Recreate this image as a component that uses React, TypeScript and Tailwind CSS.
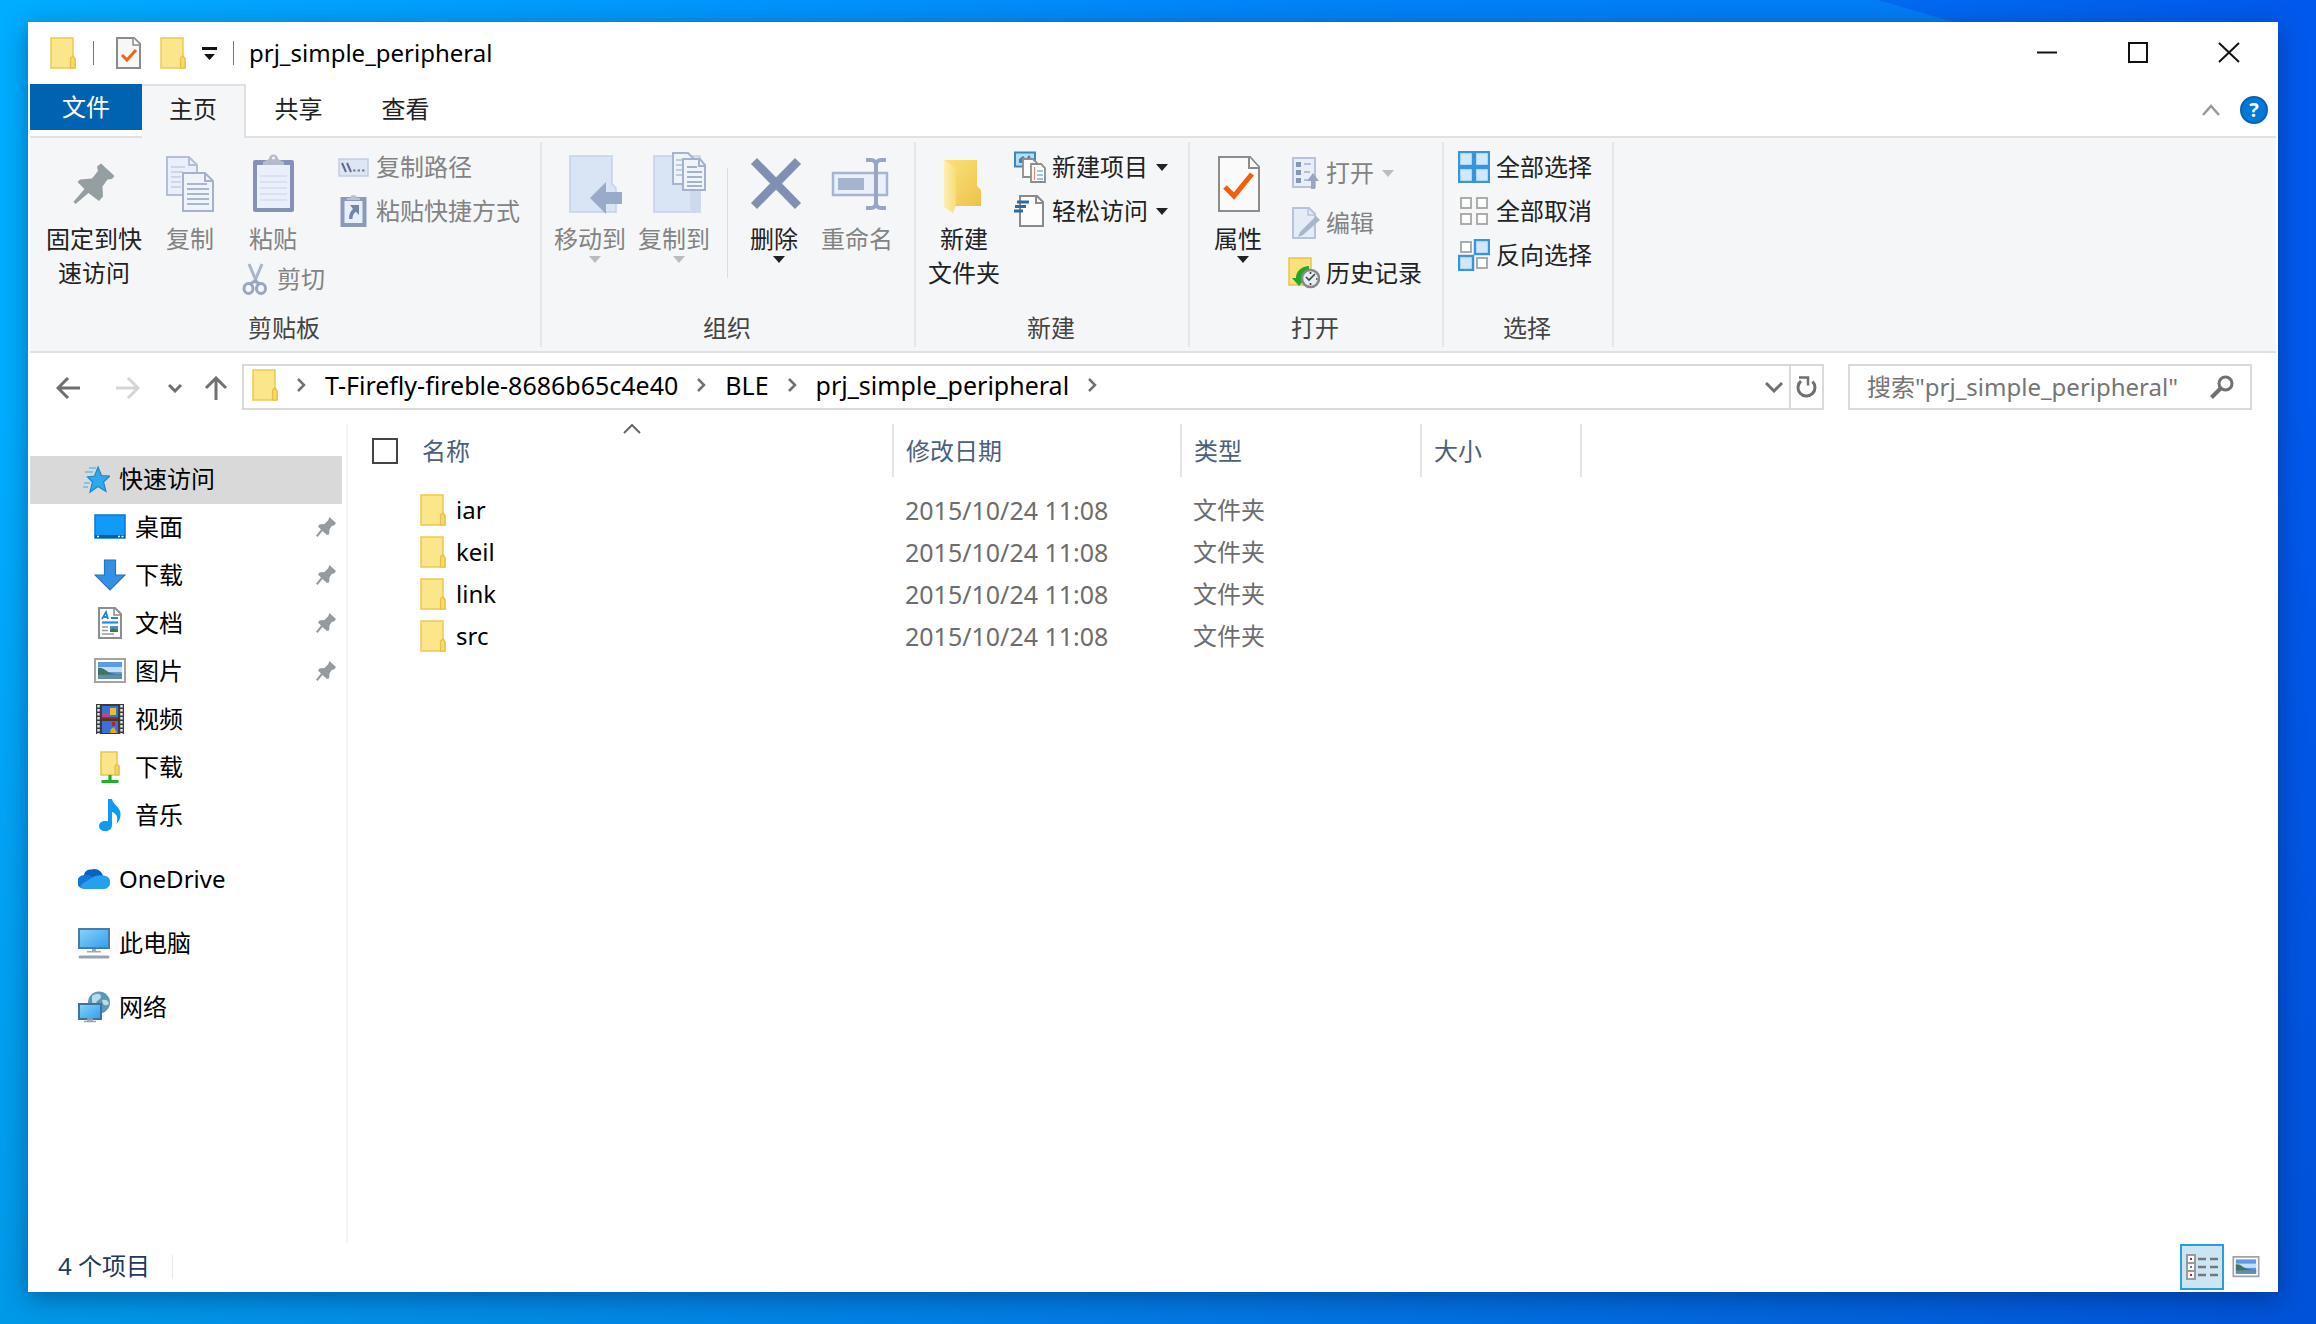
import { useState } from 'react'
import type { ReactNode } from 'react'
import { clsx } from 'clsx'

const FILES = [
  { name: 'iar', date: '2015/10/24 11:08', type: '文件夹' },
  { name: 'keil', date: '2015/10/24 11:08', type: '文件夹' },
  { name: 'link', date: '2015/10/24 11:08', type: '文件夹' },
  { name: 'src', date: '2015/10/24 11:08', type: '文件夹' },
]

const QUICK_ITEMS = [
  { label: '桌面', icon: <DesktopIcon />, pinned: true },
  { label: '下载', icon: <DownloadIcon />, pinned: true },
  { label: '文档', icon: <DocumentIcon />, pinned: true },
  { label: '图片', icon: <PictureIcon />, pinned: true },
  { label: '视频', icon: <VideoIcon />, pinned: false },
  { label: '下载', icon: <SharedFolderIcon />, pinned: false },
  { label: '音乐', icon: <MusicIcon />, pinned: false },
]

const CRUMBS = ['T-Firefly-fireble-8686b65c4e40', 'BLE', 'prj_simple_peripheral']

export default function App() {
  return (
    <div className="relative flex min-h-screen bg-linear-to-r from-[#00adff] via-[#0088fa] to-[#0058ec] pt-[22px] pr-[38px] pb-8 pl-7 font-['Noto_Sans','Noto_Sans_CJK_SC',sans-serif] text-[24px] leading-[34px] text-black">
      <Wallpaper />
      <main className="relative flex min-w-0 flex-1 flex-col bg-white px-0.5 pb-0.5 shadow-[0_6px_24px_rgba(0,20,60,0.4)]">
        <TitleBar />
        <TabStrip />
        <Ribbon />
        <AddressRow />
        <div className="flex flex-1">
          <Sidebar />
          <FileList />
        </div>
        <StatusBar />
      </main>
    </div>
  )
}

function Wallpaper() {
  return (
    <svg className="absolute inset-0 h-full w-full" viewBox="0 0 2316 1324" preserveAspectRatio="none" aria-hidden="true">
      <defs>
        <linearGradient id="wall-floor" x1="0" y1="0" x2="0" y2="1">
          <stop offset="0.3" stopColor="#003070" stopOpacity="0" />
          <stop offset="1" stopColor="#003070" stopOpacity="0.16" />
        </linearGradient>
        <linearGradient id="wall-beam" x1="0" y1="0" x2="1" y2="0">
          <stop offset="0" stopColor="#00a0ff" stopOpacity="0" />
          <stop offset="1" stopColor="#00a0ff" stopOpacity="0.4" />
        </linearGradient>
      </defs>
      <rect x="0" width="2316" height="1324" fill="url(#wall-floor)" />
      <path d="M1200 0H1878L1960 24H1200Z" fill="url(#wall-beam)" />
    </svg>
  )
}

function TitleBar() {
  return (
    <header className="flex h-[62px] shrink-0 items-center pl-5">
      <FolderIcon />
      <span className="ml-[17px] h-6 w-px bg-[#777]" />
      <button className="ml-[22px]" aria-label="属性">
        <svg width="26" height="32" viewBox="0 0 26 32" className="block">
          <path d="M1 1h17l6 6v24H1z" fill="#f7f7f8" stroke="#8b8b8b" strokeWidth="2" />
          <path d="M17 1v7h7" fill="#fff" stroke="#8b8b8b" strokeWidth="1.5" />
          <path d="M6 18l5 5 9-10" fill="none" stroke="#f0641e" strokeWidth="3" />
        </svg>
      </button>
      <button className="ml-[18px]" aria-label="新建文件夹">
        <FolderIcon />
      </button>
      <button className="ml-4" aria-label="自定义快速访问工具栏">
        <svg width="15" height="13" viewBox="0 0 15 13" className="block">
          <path d="M0 1.5h15" stroke="#111" strokeWidth="3" />
          <path d="M2 7h11l-5.500 6z" fill="#111" />
        </svg>
      </button>
      <span className="ml-4 h-6 w-px bg-[#777]" />
      <h1 className="ml-[15px]">prj_simple_peripheral</h1>
      <div className="ml-auto flex self-stretch pr-0.5">
        <CaptionButton label="最小化">
          <path d="M1 10.500h20" />
        </CaptionButton>
        <CaptionButton label="最大化">
          <path d="M2 1h18v19H2z" />
        </CaptionButton>
        <CaptionButton label="关闭">
          <path d="M1 1l20 19M21 1L1 20" />
        </CaptionButton>
      </div>
    </header>
  )
}

function CaptionButton({ label, children }: { label: string; children: ReactNode }) {
  return (
    <button className="flex w-[91px] items-center justify-center pb-0.5 hover:bg-[#e5e5e5]" aria-label={label}>
      <svg width="22" height="21" viewBox="0 0 22 21" fill="none" stroke="#111" strokeWidth="2">
        {children}
      </svg>
    </button>
  )
}

function TabStrip() {
  const [active, setActive] = useState('主页')

  return (
    <nav className="flex h-[54px] shrink-0 border-b-2 border-[#dfe1e2]">
      <button className="h-[46px] w-28 bg-[#0063b1] text-white">文件</button>
      {['主页', '共享', '查看'].map(tab => (
        <button
          key={tab}
          onClick={() => setActive(tab)}
          className={clsx(
            'h-[54px] border-t-2 border-r-2 pb-1.5 text-[#222]',
            active === tab ? 'w-[104px] border-[#dfe1e2] bg-[#f4f6f8]' : 'w-[107px] border-transparent'
          )}>
          {tab}
        </button>
      ))}
      <div className="ml-auto flex items-center gap-5 pr-2">
        <button aria-label="最小化功能区">
          <svg width="18" height="12" viewBox="0 0 18 12" className="block">
            <path d="M1 11l8-9 8 9" fill="none" stroke="#9a9a9a" strokeWidth="2.500" />
          </svg>
        </button>
        <button
          className="size-7 rounded-full border-2 border-[#0a63b0] bg-[#0078d7] text-[20px] leading-6 font-bold text-white"
          aria-label="帮助">
          ?
        </button>
      </div>
    </nav>
  )
}

function Ribbon() {
  return (
    <section className="flex h-[215px] shrink-0 border-b-2 border-[#dfe1e2] bg-[#f4f6f8] py-1 text-[#222]">
      <RibbonGroup label="剪贴板" width="w-[512px]" inset="pl-4">
        <BigButton lines={['固定到快', '速访问']} icon={<BigPinIcon />} className="w-24" />
        <BigButton lines={['复制']} icon={<CopyIcon />} className="w-24" disabled />
        <div className="flex w-[98px] flex-col items-start gap-2 pl-px">
          <BigButton lines={['粘贴']} icon={<PasteIcon />} className="w-[68px]" disabled />
          <SmallButton label="剪切" icon={<CutIcon />} disabled />
        </div>
        <div className="flex flex-col items-start gap-3.5 pl-0.5">
          <SmallButton label="复制路径" icon={<CopyPathIcon />} disabled />
          <SmallButton label="粘贴快捷方式" icon={<PasteShortcutIcon />} disabled />
        </div>
      </RibbonGroup>

      <RibbonGroup label="组织" width="w-[374px]" inset="pl-1.5">
        <BigButton lines={['移动到']} icon={<MoveToIcon />} className="w-[84px]" menu disabled />
        <BigButton lines={['复制到']} icon={<CopyToIcon />} className="w-[84px]" menu disabled />
        <span className="mt-4 mr-1.5 ml-[11px] h-[110px] w-px bg-[#dcdfe2]" />
        <BigButton lines={['删除']} icon={<DeleteIcon />} className="w-20" menu />
        <BigButton lines={['重命名']} icon={<RenameIcon />} className="w-[86px]" disabled />
      </RibbonGroup>

      <RibbonGroup label="新建" width="w-[274px]">
        <BigButton lines={['新建', '文件夹']} icon={<NewFolderIcon />} className="w-24" />
        <div className="flex flex-col items-start gap-3.5 pl-0.5">
          <SmallButton label="新建项目" icon={<NewItemIcon />} menu />
          <SmallButton label="轻松访问" icon={<EasyAccessIcon />} menu />
        </div>
      </RibbonGroup>

      <RibbonGroup label="打开" width="w-[254px]">
        <BigButton lines={['属性']} icon={<PropertiesIcon />} className="w-24" menu />
        <div className="flex flex-col items-start gap-5 pt-1.5 pl-0.5">
          <SmallButton label="打开" icon={<OpenIcon />} menu disabled />
          <SmallButton label="编辑" icon={<EditIcon />} disabled />
          <SmallButton label="历史记录" icon={<HistoryIcon />} />
        </div>
      </RibbonGroup>

      <RibbonGroup label="选择" width="w-[170px]" inset="pl-3.5">
        <div className="flex flex-col items-start gap-3.5">
          <SmallButton label="全部选择" icon={<SelectIcon cells={[true, true, true, true]} />} />
          <SmallButton label="全部取消" icon={<SelectIcon cells={[false, false, false, false]} />} />
          <SmallButton label="反向选择" icon={<SelectIcon cells={[false, true, true, false]} />} />
        </div>
      </RibbonGroup>
    </section>
  )
}

interface RibbonGroupProps {
  label: string
  width: string
  inset?: string
  children: ReactNode
}

function RibbonGroup({ label, width, inset, children }: RibbonGroupProps) {
  return (
    <div className={clsx('flex shrink-0 flex-col border-r-2 border-[#e4e6e8] pt-2.5 pb-0.5', width)}>
      <div className={clsx('flex min-h-0 flex-1', inset)}>{children}</div>
      <div className="pr-0.5 text-center text-[#444]">{label}</div>
    </div>
  )
}

interface BigButtonProps {
  lines: string[]
  icon: ReactNode
  className: string
  menu?: boolean
  disabled?: boolean
}

function BigButton({ lines, icon, className, menu, disabled }: BigButtonProps) {
  return (
    <button
      disabled={disabled}
      className={clsx('flex shrink-0 flex-col items-center self-start disabled:text-[#838383]', className)}>
      <span className="h-[70px]">{icon}</span>
      {lines.map(line => (
        <span key={line} className="whitespace-nowrap">{line}</span>
      ))}
      {menu && <MenuArrow className="ml-2.5" />}
    </button>
  )
}

interface SmallButtonProps {
  label: string
  icon: ReactNode
  menu?: boolean
  disabled?: boolean
}

function SmallButton({ label, icon, menu, disabled }: SmallButtonProps) {
  return (
    <button
      disabled={disabled}
      className="flex h-[30px] shrink-0 items-center gap-1.5 whitespace-nowrap disabled:text-[#838383]">
      {icon}
      <span>{label}</span>
      {menu && <MenuArrow className="ml-0.5" />}
    </button>
  )
}

function MenuArrow({ className }: { className: string }) {
  return (
    <svg width="12" height="7" viewBox="0 0 12 7" className={clsx('[:disabled>&]:opacity-50', className)}>
      <path d="M0 0h12L6 7z" fill="currentColor" />
    </svg>
  )
}

function AddressRow() {
  return (
    <div className="flex h-[71px] shrink-0 items-start pt-[11px] pr-6 pl-[26px]">
      <div className="flex h-[46px] items-center pt-0.5 text-[#707070]">
        <button aria-label="后退">
          <svg width="24" height="22" viewBox="0 0 24 22" fill="none" stroke="currentColor" strokeWidth="3" className="block">
            <path d="M24 11H2M12 1L2 11l10 10" />
          </svg>
        </button>
        <button className="ml-9 text-[#d5d5d5]" aria-label="前进">
          <svg width="24" height="22" viewBox="0 0 24 22" fill="none" stroke="currentColor" strokeWidth="3" className="block">
            <path d="M0 11h22M12 1l10 10-10 10" />
          </svg>
        </button>
        <button className="ml-7" aria-label="最近浏览的位置">
          <svg width="14" height="9" viewBox="0 0 14 9" fill="none" stroke="currentColor" strokeWidth="3" className="block">
            <path d="M1 1l6 6 6-6" />
          </svg>
        </button>
        <button className="ml-[22px]" aria-label="上移">
          <svg width="24" height="24" viewBox="0 0 24 24" fill="none" stroke="currentColor" strokeWidth="3" className="block">
            <path d="M12 24V2M2 12L12 2l10 10" />
          </svg>
        </button>
      </div>

      <div className="ml-3.5 flex h-[46px] flex-1 items-center border-2 border-[#d9d9d9] pl-2">
        <div className="flex items-center gap-[19px] pb-1">
          <FolderIcon />
          <CrumbChevron />
          {CRUMBS.map(crumb => (
            <div key={crumb} className="flex items-center gap-[19px]">
              <a href="#" className="text-[25px] whitespace-nowrap">{crumb}</a>
              <CrumbChevron />
            </div>
          ))}
        </div>
        <div className="ml-auto flex self-stretch">
          <button className="px-1.5" aria-label="以前的位置">
            <svg width="18" height="12" viewBox="0 0 18 12" fill="none" stroke="#707070" strokeWidth="3">
              <path d="M1 2l8 8 8-8" />
            </svg>
          </button>
          <button className="flex w-[33px] items-center justify-center border-l-2 border-[#d9d9d9]" aria-label="刷新">
            <svg width="22" height="24" viewBox="0 0 22 24" fill="none" stroke="#707070" strokeWidth="3">
              <path d="M5 6A8.500 8.500 0 1 0 16.500 6.500" />
              <path d="M3 2.500h9v8" strokeWidth="2.500" />
            </svg>
          </button>
        </div>
      </div>

      <label className="ml-6 flex h-[46px] w-[404px] items-center border-2 border-[#d9d9d9] pr-4 pl-[17px]">
        <input
          type="text"
          aria-label="搜索"
          placeholder={'搜索"prj_simple_peripheral"'}
          className="min-w-0 flex-1 outline-none placeholder:text-[#757575]"
        />
        <svg width="24" height="24" viewBox="0 0 24 24" fill="none" stroke="#707070">
          <circle cx="15.500" cy="8.500" r="6.500" strokeWidth="3" />
          <path d="M11 13L1.500 22.500" strokeWidth="4" />
        </svg>
      </label>
    </div>
  )
}

function CrumbChevron() {
  return (
    <svg width="9" height="14" viewBox="0 0 9 14" fill="none" stroke="#707070" strokeWidth="2.500" className="shrink-0">
      <path d="M1 1l6 6-6 6" />
    </svg>
  )
}

function Sidebar() {
  return (
    <aside className="w-[318px] shrink-0 border-r-2 border-[#f3f3f3] pt-8 pr-1">
      <a href="#" className="flex h-12 items-center gap-[9px] bg-[#d9d9d9] pb-0.5 pl-12">
        <StarIcon />
        快速访问
      </a>
      <ul className="mb-4">
        {QUICK_ITEMS.map((item, i) => (
          <li key={i}>
            <a href="#" className="flex h-12 items-center gap-[9px] pr-1.5 pb-0.5 pl-16 hover:bg-[#e5f3ff]">
              {item.icon}
              {item.label}
              {item.pinned && <PinIcon />}
            </a>
          </li>
        ))}
      </ul>
      <div className="flex flex-col gap-4">
        <a href="#" className="flex h-12 items-center gap-[9px] pb-0.5 pl-12"><CloudIcon />OneDrive</a>
        <a href="#" className="flex h-12 items-center gap-[9px] pb-0.5 pl-12"><ComputerIcon />此电脑</a>
        <a href="#" className="flex h-12 items-center gap-[9px] pb-0.5 pl-12"><NetworkIcon />网络</a>
      </div>
    </aside>
  )
}

function FileList() {
  return (
    <div className="min-w-0 flex-1">
      <table className="w-[1233px] table-fixed border-collapse text-left">
        <thead className="text-[#4c607a]">
          <tr className="h-[53px]">
            <th className="w-[545px] border-r-2 border-[#e5e5e5] p-0 font-normal">
              <div className="relative ml-6 flex h-[53px] items-center gap-6">
                <input type="checkbox" aria-label="全选" className="size-[26px] appearance-none border-2 border-[#444] checked:bg-[#0078d7]" />
                <span>名称</span>
                <svg width="18" height="10" viewBox="0 0 18 10" fill="none" stroke="#666" strokeWidth="2" className="absolute top-0 left-1/2 -translate-x-1/2">
                  <path d="M1 9l8-8 8 8" />
                </svg>
              </div>
            </th>
            <th className="w-[288px] border-r-2 border-[#e5e5e5] py-0 pr-0 pl-3 font-normal">修改日期</th>
            <th className="w-[240px] border-r-2 border-[#e5e5e5] py-0 pr-0 pl-3 font-normal">类型</th>
            <th className="w-[160px] border-r-2 border-[#e5e5e5] py-0 pr-0 pl-3 font-normal">大小</th>
          </tr>
        </thead>
        <tbody className="text-[#6d6d6d] before:block before:h-3 before:content-['']">
          {FILES.map(file => (
            <tr key={file.name} className="h-[42px] hover:bg-[#e5f3ff]">
              <td className="p-0">
                <div className="flex items-center gap-2.5 pl-[72px] text-black">
                  <FolderIcon />
                  {file.name}
                </div>
              </td>
              <td className="py-0 pr-0 pl-3 text-[25px]">{file.date}</td>
              <td className="py-0 pr-0 pl-3">{file.type}</td>
              <td />
            </tr>
          ))}
        </tbody>
      </table>
    </div>
  )
}

function StatusBar() {
  return (
    <footer className="flex h-[47px] shrink-0 items-center pr-4 pl-7 text-[#1e395b]">
      <span className="pb-0.5">{FILES.length} 个项目</span>
      <span className="ml-[22px] h-6 w-px bg-[#e8e8e8]" />
      <div className="ml-auto flex items-center gap-2">
        <button className="flex h-[46px] w-11 items-center justify-center border-2 border-[#2a9fd6] bg-[#cbe5f3]" aria-label="详细信息">
          <svg width="32" height="26" viewBox="0 0 32 26">
            <path d="M1 1h8v24H1zM1 9h8M1 17h8" fill="#fff" stroke="#9a9a9a" strokeWidth="2" />
            <path d="M4 5h2" stroke="#555" strokeWidth="2" />
            <path d="M4 13h2" stroke="#6a6aff" strokeWidth="2" />
            <path d="M4 21h2" stroke="#d0203a" strokeWidth="2" />
            <path d="M12 5h8M24 5h8M12 13h8M24 13h8M12 21h8M24 21h8" stroke="#777" strokeWidth="2.500" />
          </svg>
        </button>
        <button aria-label="大图标">
          <svg width="28" height="22" viewBox="0 0 32 26" className="block">
            <PictureArt />
          </svg>
        </button>
      </div>
    </footer>
  )
}

/* ---------- icons ---------- */

function FolderIcon() {
  return (
    <svg width="26" height="32" viewBox="0 0 26 32" className="block shrink-0">
      <path d="M1 1h22v18l2 3v9H1z" fill="#fce68b" stroke="#ecca52" strokeWidth="1.500" />
      <path d="M20.500 31V21l2.500-2 2 3v9z" fill="#f8d968" stroke="#e6c044" strokeWidth="1.200" />
    </svg>
  )
}

function BigIcon({ children }: { children: ReactNode }) {
  return <svg width="64" height="64" viewBox="0 0 64 64" fill="none" className="block">{children}</svg>
}

function SmallIcon({ children }: { children: ReactNode }) {
  return <svg width="32" height="32" viewBox="0 0 32 32" fill="none" className="block shrink-0">{children}</svg>
}

function BigPinIcon() {
  return (
    <BigIcon>
      <path d="M39 11.500L52.500 24 50 27l-4.500.5-5 7 .5 10-4 4.500-10.500-8L13.500 52l-2-2.200L22.500 37 15.500 30l2.500-2.500 12-1 6-7.500-1-4.500z" fill="#949fa2" />
    </BigIcon>
  )
}

function CopyIcon() {
  return (
    <BigIcon>
      <path d="M9 5h22l8 8v30H9z" fill="#eaf0fa" stroke="#b3bfd8" strokeWidth="2" />
      <path d="M31 5v8h8" stroke="#b3bfd8" strokeWidth="2" />
      <path d="M13 15h14M13 20h12M13 25h10M13 30h10M13 35h10" stroke="#c3cee3" strokeWidth="1.500" />
      <path d="M25 21h22l8 8v30H25z" fill="#eef3fc" stroke="#a4b2ce" strokeWidth="2" />
      <path d="M47 21v8h8" stroke="#a4b2ce" strokeWidth="2" />
      <path d="M29 32h20M29 37h22M29 42h22M29 47h22M29 52h22" stroke="#a9b6d0" strokeWidth="1.800" />
    </BigIcon>
  )
}

function PasteIcon() {
  return (
    <BigIcon>
      <rect x="12" y="8" width="41" height="52" rx="2" fill="#8493b5" />
      <path d="M16 13h33v43H16z" fill="#e9f0fb" />
      <path d="M19 24h27M19 30h27M19 36h27M19 42h27M19 48h27" stroke="#d3ddee" strokeWidth="1.500" />
      <path d="M22 13V10l6-3a4.500 4.500 0 0 1 9 0l6 3v3z" fill="#b4bbc9" />
      <circle cx="32.500" cy="6" r="1.600" fill="#eef1f6" />
    </BigIcon>
  )
}

function CutIcon() {
  return (
    <SmallIcon>
      <path d="M10 1l8 19M23 1l-8 19" stroke="#a9b5ce" strokeWidth="3" />
      <ellipse cx="9.500" cy="25.500" rx="4.500" ry="5" stroke="#98a6c4" strokeWidth="3" />
      <ellipse cx="22" cy="25.500" rx="4.500" ry="5" stroke="#98a6c4" strokeWidth="3" />
      <path d="M11 21l5-3 5 3" stroke="#98a6c4" strokeWidth="3" />
    </SmallIcon>
  )
}

function CopyPathIcon() {
  return (
    <SmallIcon>
      <path d="M1 8h29v17H1z" fill="#dde6f3" stroke="#c2cde2" strokeWidth="1.500" />
      <path d="M4 12l4 9M9 12l4 9" stroke="#5e6c8c" strokeWidth="2" />
      <path d="M15 19.500h2.500M19.500 19.500H22M24 19.500h2.500" stroke="#6e7b99" strokeWidth="2.200" />
    </SmallIcon>
  )
}

function PasteShortcutIcon() {
  return (
    <SmallIcon>
      <path d="M4.500 4h22v26h-22z" fill="#e6eefa" stroke="#8c9aba" strokeWidth="4" />
      <path d="M9 5V3h3a3.500 3 0 0 1 7 0h3v2z" fill="#b9c2d2" />
      <path d="M12 10h9v10l-3.200-3.200c-2.500 2-3.300 4-3.300 7.200H11c0-4.500 1.200-7.500 4-10z" fill="#7385ad" />
    </SmallIcon>
  )
}

function MoveToIcon() {
  return (
    <BigIcon>
      <path d="M12 4h42v28l4 4v24H12z" fill="#d9e4f4" stroke="#c1d2ea" strokeWidth="1.500" />
      <path d="M32 46l16-16v10h16v12H48v10z" fill="#9aabc9" />
    </BigIcon>
  )
}

function CopyToIcon() {
  return (
    <BigIcon>
      <path d="M12 4h46v56H12z" fill="#d9e4f4" stroke="#c1d2ea" strokeWidth="1.500" />
      <path d="M48 38h10v22H48z" fill="#ccdaee" />
      <path d="M31 1h15l5 5v26H31z" fill="#eef3fb" stroke="#a7b4cd" strokeWidth="2" />
      <path d="M34 8h7M34 13h6M34 18h6M34 23h6" stroke="#b3bfd6" strokeWidth="1.500" />
      <path d="M41 7h17l5 6v25H41z" fill="#eff4fc" stroke="#a4b1cb" strokeWidth="2" />
      <path d="M57 7v7h6" stroke="#a4b1cb" strokeWidth="2" />
      <path d="M45 15h10M45 20h15M45 25h15M45 30h15M45 34h15" stroke="#a4b1cb" strokeWidth="1.800" />
    </BigIcon>
  )
}

function DeleteIcon() {
  return (
    <BigIcon>
      <path d="M12 9l44 45M56 9L12 54" stroke="#8090b4" strokeWidth="8.500" />
    </BigIcon>
  )
}

function RenameIcon() {
  return (
    <BigIcon>
      <path d="M8 21h54v22H8z" fill="#eaf0fb" stroke="#a5b4d0" strokeWidth="2.500" />
      <path d="M13 26h26v12H13z" fill="#a6b4cf" />
      <path d="M41 8h5c3 0 5 2 5 5v38c0 3-2 5-5 5h-5M61 8h-5c-3 0-5 2-5 5v38c0 3 2 5 5 5h5" stroke="#97a6c4" strokeWidth="4" />
    </BigIcon>
  )
}

function NewFolderIcon() {
  return (
    <BigIcon>
      <defs>
        <linearGradient id="folder-back" x1="0" y1="0" x2="1" y2="1">
          <stop offset="0" stopColor="#fbe27a" />
          <stop offset="1" stopColor="#eec24c" />
        </linearGradient>
        <linearGradient id="folder-flap" x1="0" y1="0" x2="1" y2="0">
          <stop offset="0" stopColor="#fdf0b0" />
          <stop offset="1" stopColor="#f7dc7d" />
        </linearGradient>
      </defs>
      <path d="M13 8h32v26l4 4v16H20z" fill="url(#folder-back)" />
      <path d="M12 8l12 8v36l-3 9-9-6z" fill="url(#folder-flap)" />
    </BigIcon>
  )
}

function PropertiesIcon() {
  return (
    <BigIcon>
      <path d="M13 5h31l9 10v44H13z" fill="#fafafa" stroke="#8c8c8c" strokeWidth="2" />
      <path d="M43 5v11h10" fill="#fff" stroke="#8c8c8c" strokeWidth="2" />
      <path d="M19 35l9 9 18-22" stroke="#f2600c" strokeWidth="5" />
    </BigIcon>
  )
}

function NewItemIcon() {
  return (
    <SmallIcon>
      <path d="M1 1.500h20v14H1z" fill="#b7dcf3" stroke="#3d88b8" strokeWidth="2" />
      <path d="M5 8l4-3 3 3 3-4 3 5v3H5z" fill="#3b86b4" />
      <path d="M9 8h10l4 4v14H9z" fill="#fff" stroke="#8d8d8d" strokeWidth="1.800" />
      <path d="M17 13h10l4 4v14H17z" fill="#fff" stroke="#8d8d8d" strokeWidth="1.800" />
      <path d="M23 20h6M23 24h6M23 28h6" stroke="#79b4dc" strokeWidth="1.500" />
      <path d="M20.500 16v13" stroke="#e58a78" strokeWidth="1.200" />
    </SmallIcon>
  )
}

function EasyAccessIcon() {
  return (
    <SmallIcon>
      <path d="M6 1h17l6 6v24H6z" fill="#fcfcfc" stroke="#8a8a8a" strokeWidth="2" />
      <path d="M22 1v7h7" stroke="#8a8a8a" strokeWidth="2" />
      <path d="M3 7h12M1 11.500h11M0 16h9" stroke="#2c6ca4" strokeWidth="2.800" />
    </SmallIcon>
  )
}

function OpenIcon() {
  return (
    <SmallIcon>
      <path d="M5 1h22v29H5z" fill="#e8eefa" stroke="#b7c3da" strokeWidth="2" />
      <path d="M8 5h5v5H8zM8 13h5v5H8zM8 21h5v5H8z" fill="#8595b6" />
      <path d="M16 7h7M16 15h6M16 23h4" stroke="#b3c0d8" strokeWidth="2" />
      <path d="M25 16l6 8h-4v8h-4v-8h-4z" fill="#98a6c2" />
    </SmallIcon>
  )
}

function EditIcon() {
  return (
    <SmallIcon>
      <path d="M5 1h16l6 6v24H5z" fill="#e4ecf8" stroke="#b7c3da" strokeWidth="2" />
      <path d="M20 1v7h7" stroke="#b7c3da" strokeWidth="1.500" />
      <path d="M28 9l4 4-17 15-5 2 2-5z" fill="#a9b5cd" />
    </SmallIcon>
  )
}

function HistoryIcon() {
  return (
    <SmallIcon>
      <path d="M1 1h22v27H1z" fill="#fbe07c" stroke="#e9c44c" strokeWidth="1.500" />
      <path d="M21 9C11 10 8 16 8 21H4l7 8 7-8h-4c0-4 2-7 7-7z" fill="#23a52b" />
      <circle cx="22.500" cy="21.500" r="8.500" fill="#e9ecee" stroke="#85898c" strokeWidth="2.500" />
      <path d="M18 20l3 3 6-6M22.500 26v2M28 22h1.500M22.500 15v2" stroke="#444" strokeWidth="1.600" />
    </SmallIcon>
  )
}

function SelectIcon({ cells }: { cells: boolean[] }) {
  const spots = [[0, 0], [16, 0], [0, 16], [16, 16]]
  return (
    <SmallIcon>
      {cells.map((on, i) => {
        const [x, y] = spots[i]
        return on ? (
          <rect key={i} x={x + 1} y={y + 1} width="14" height="14" fill="#cfe8fc" stroke="#3795de" strokeWidth="2.400" />
        ) : (
          <rect key={i} x={x + 3} y={y + 3} width="10" height="10" fill="#fff" stroke="#a3a3a3" strokeWidth="1.800" />
        )
      })}
    </SmallIcon>
  )
}

function StarIcon() {
  return (
    <SmallIcon>
      <path d="M20 4l3.500 8.500 8.500.5-6.500 6 2.500 9.500-8-5-8 5.500 2.500-10-5-5 7-1z" fill="#2fa8ee" stroke="#1b86cf" strokeWidth="1.200" />
      <path d="M11 5h7M7 9h8M6 20h6M5 24h5" stroke="#63bdf0" strokeWidth="1.600" />
    </SmallIcon>
  )
}

function DesktopIcon() {
  return (
    <SmallIcon>
      <path d="M1 4h30v23H1z" fill="#129af8" stroke="#0a78cf" strokeWidth="1.500" />
      <path d="M1 24h30v3H1z" fill="#0a5da3" />
      <path d="M3 25.500h2M24 25.500h2M27.500 25.500h2" stroke="#fff" strokeWidth="1.500" />
    </SmallIcon>
  )
}

function DownloadIcon() {
  return (
    <SmallIcon>
      <path d="M10.500 1h11v15H31L16 31 1 16h9.500z" fill="#3590e4" stroke="#2274c4" strokeWidth="1.200" />
    </SmallIcon>
  )
}

function DocumentIcon() {
  return (
    <SmallIcon>
      <path d="M5 1h16l6 6v24H5z" fill="#fdfdfd" stroke="#8d8d8d" strokeWidth="2" />
      <path d="M20 1v7h7" stroke="#8d8d8d" strokeWidth="1.600" />
      <path d="M8 12l4-7 2 7M10 10h4M17 11h7" stroke="#1e88d8" strokeWidth="1.800" />
      <path d="M8 15.500h16" stroke="#1a8fe3" strokeWidth="2.200" />
      <path d="M8 20h6M8 23.500h6M8 27h12" stroke="#9a9a9a" strokeWidth="1.500" />
      <path d="M16 19h8v6h-8z" fill="#4a90c0" />
      <path d="M16 23l3-2 5 2.500V25h-8z" fill="#3c7a50" />
    </SmallIcon>
  )
}

function PictureArt() {
  return (
    <>
      <path d="M1 1h30v23H1z" fill="#fff" stroke="#a3a3a3" strokeWidth="2" />
      <path d="M4 4h24v17H4z" fill="#5b9ae8" />
      <path d="M4 9h24v5H4z" fill="#c6def6" />
      <path d="M4 10c6-1 8 4 13 5 4 1 7 1 11 1.500V18H4z" fill="#3f7562" />
      <path d="M4 17c8 0 16-1 24 0v4H4z" fill="#5f8fae" />
    </>
  )
}

function PictureIcon() {
  return (
    <svg width="32" height="26" viewBox="0 0 32 26" className="block shrink-0" fill="none">
      <PictureArt />
    </svg>
  )
}

function VideoIcon() {
  return (
    <SmallIcon>
      <path d="M2 1h28v30H2z" fill="#3a3a3a" />
      <path d="M4.500 2v29M27.500 2v29" stroke="#e4e4e4" strokeWidth="2.500" strokeDasharray="2.500 1.500" />
      <path d="M8 3h16v12H8zM8 18h16v12H8z" fill="#3e6fd6" />
      <path d="M8 10h8v5H8z" fill="#b54a8b" />
      <path d="M16 5h6v7h-6z" fill="#e4c32a" />
      <path d="M8 14h16v1.500H8zM18 19h3v4h-3z" fill="#b3261c" />
      <path d="M17 26l3-2 3 6h-7z" fill="#e8a81e" />
    </SmallIcon>
  )
}

function SharedFolderIcon() {
  return (
    <SmallIcon>
      <path d="M7 1h16v12l2 2v9H7z" fill="#fbe587" stroke="#e8c64e" strokeWidth="1.500" />
      <path d="M21 24v-9l1.500-2 2.500 2v9z" fill="#f3d260" stroke="#dfb940" />
      <path d="M16 24v5M7.500 30.500h17" stroke="#1db02a" strokeWidth="3.200" />
    </SmallIcon>
  )
}

function MusicIcon() {
  return (
    <SmallIcon>
      <path d="M14 0h4c1 6 9 8 8.500 16 0 4-2 7-4 9 1-4 2-10-4.500-12v13c0 8-13 8-13 1 0-4 5-6 9-4.500z" fill="#0d9af5" />
    </SmallIcon>
  )
}

function PinIcon() {
  return (
    <svg width="20" height="20" viewBox="0 0 20 20" className="ml-auto block shrink-0">
      <path d="M13.500 0L20 6l-2 2.500-2 .3-2.500 3.500-.3 5L11 18l-4.500-4L1.500 20 0 18.500 5 12.500 2 9.500l1.500-2 5-.5L12 3.500z" fill="#949a9f" />
    </svg>
  )
}

function CloudIcon() {
  return (
    <SmallIcon>
      <path d="M6 12a6.500 6.500 0 0 1 7-5.500c5-2 11 1 12 6.500L14 21z" fill="#0a62c0" />
      <path d="M8 26a8 7 0 0 1-2-14c6-1 9 3 15 6L12 26z" fill="#1178d8" />
      <path d="M25 12.500a6.500 6.500 0 0 1 1 13.500H7c-3 0-4-2-4.500-3.500 4-3.500 6-4.500 10-7 4-3 9-4 12.500-3z" fill="#25a0ee" />
    </SmallIcon>
  )
}

function ComputerIcon() {
  return (
    <SmallIcon>
      <defs>
        <linearGradient id="screen" x1="0" y1="0" x2="1" y2="1">
          <stop offset="0" stopColor="#8ad2fb" />
          <stop offset="1" stopColor="#2d9fee" />
        </linearGradient>
      </defs>
      <path d="M1 2h30v19H1z" fill="url(#screen)" stroke="#4a7ba0" strokeWidth="2" />
      <path d="M14 22h4v2h-4zM9 24h14v1.500H9z" fill="#9aa9b6" />
      <path d="M2 30h28" stroke="#97a3b0" strokeWidth="3" strokeLinecap="round" />
    </SmallIcon>
  )
}

function NetworkIcon() {
  return (
    <SmallIcon>
      <circle cx="21" cy="11.500" r="11" fill="#5b97b8" />
      <path d="M14 5c4-3 8-3 9 0s-4 4-5 7-4 0-4-2zM24 9c3-1 6 0 7 3-1 3-4 3-6 1z" fill="#b9dbe8" />
      <path d="M1 13h22v15H1z" fill="url(#screen)" stroke="#3f759c" strokeWidth="2" />
      <path d="M10 28h4v2h-4zM6 30.500h12" stroke="#94a5b3" strokeWidth="1.500" />
    </SmallIcon>
  )
}
